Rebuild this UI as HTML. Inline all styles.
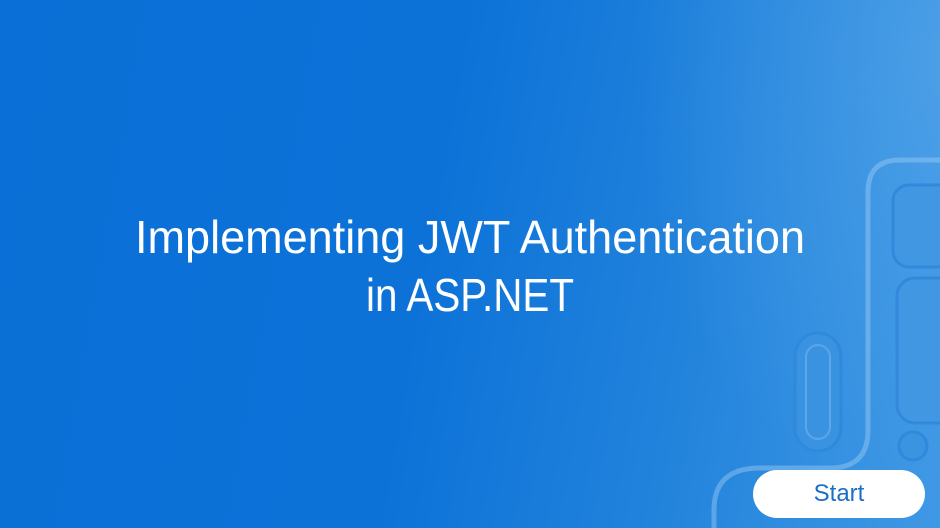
<!DOCTYPE html>
<html><head><meta charset="utf-8"><style>
html,body{margin:0;padding:0}
body{width:940px;height:528px;overflow:hidden;position:relative;
background:linear-gradient(100deg,#0a6fd6 0%,#0c72d8 45%,#2283dc 72%,#3f98e4 100%);font-family:"Liberation Sans",sans-serif}
.btn{position:absolute;left:753px;top:470px;width:172px;height:48px;background:#fff;border-radius:24px;color:#1a6fc8;font-size:24px;line-height:48px;text-align:center}
</style></head><body>
<svg width="940" height="528" style="position:absolute;left:0;top:0">
<defs>
<radialGradient id="g" cx="1" cy="0.1" r="0.9"><stop offset="0" stop-color="#6fb6ef" stop-opacity="0.35"/><stop offset="1" stop-color="#6fb6ef" stop-opacity="0"/></radialGradient>
</defs>
<rect x="600" y="0" width="340" height="528" fill="url(#g)"/>
<path d="M960 160 H900 Q868 160 868 192 V430 Q868 468 830 468 H760 Q714 468 714 510 V540" fill="none" stroke="#9ccdf5" stroke-opacity="0.45" stroke-width="5"/>
<rect x="893" y="185" width="70" height="82" rx="16" fill="#4197e2" stroke="#3189dc" stroke-width="3"/>
<rect x="897" y="278" width="70" height="145" rx="18" fill="#4197e2" stroke="#3189dc" stroke-width="3"/>
<rect x="795" y="333" width="46" height="118" rx="23" fill="#3a93e0" stroke="#2f89dc" stroke-width="3"/>
<rect x="806" y="345" width="24" height="94" rx="12" fill="none" stroke="#59a6e8" stroke-width="2"/>
<circle cx="913" cy="446" r="14" fill="#3c94e1" stroke="#2f89dc" stroke-width="3"/>
<g fill="#fff" font-family="Liberation Sans, sans-serif" font-size="46" text-anchor="middle">
<text x="470" y="253" textLength="670" lengthAdjust="spacingAndGlyphs">Implementing JWT Authentication</text>
<text x="470" y="311" textLength="208" lengthAdjust="spacingAndGlyphs">in ASP.NET</text>
</g>
</svg>
<div class="btn">Start</div>
</body></html>
